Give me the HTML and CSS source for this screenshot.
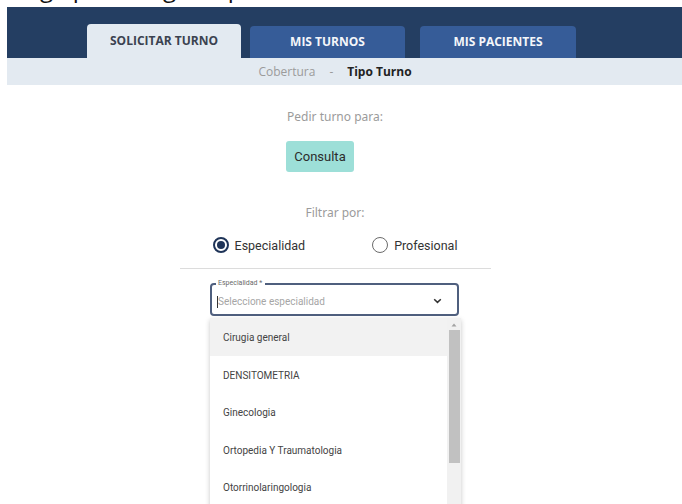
FILE: index.html
```html
<!DOCTYPE html>
<html lang="es">
<head>
<meta charset="utf-8">
<title>Solicitar turno</title>
<link rel="stylesheet" href="styles.css">
</head>
<body>
<div class="page">
  <div class="intro"><h1 class="intro-title">Llegá para elegir tu plan</h1></div>

  <header class="topbar">
    <nav class="tabs">
      <a class="tab tab-active">SOLICITAR TURNO</a>
      <a class="tab tab-second">MIS TURNOS</a>
      <a class="tab tab-third">MIS PACIENTES</a>
    </nav>
  </header>

  <div class="crumbs">
    <div class="crumbs-inner">
      <span class="crumb">Cobertura</span>
      <span class="crumb-sep">-</span>
      <span class="crumb crumb-current">Tipo Turno</span>
    </div>
  </div>

  <main class="main">
    <p class="hint">Pedir turno para:</p>
    <button class="chip">Consulta</button>

    <p class="hint hint-filter">Filtrar por:</p>
    <div class="radios">
      <label class="radio">
        <span class="radio-dot radio-dot-on"></span>
        <span class="radio-label">Especialidad</span>
      </label>
      <label class="radio">
        <span class="radio-dot"></span>
        <span class="radio-label">Profesional</span>
      </label>
    </div>

    <hr class="divider">

    <div class="select-wrap">
      <div class="select">
        <span class="select-label">Especialidad *</span>
        <span class="caret"></span>
        <span class="select-placeholder">Seleccione especialidad</span>
        <svg class="chevron" width="9" height="6" viewBox="0 0 9 6"><path d="M1.2 1.2 L4.5 4.4 L7.8 1.2" fill="none" stroke="#333" stroke-width="1.5"/></svg>
      </div>

      <div class="menu">
        <ul class="menu-list">
          <li class="menu-item menu-item-active">Cirugia general</li>
          <li class="menu-item">DENSITOMETRIA</li>
          <li class="menu-item">Ginecologia</li>
          <li class="menu-item">Ortopedia Y Traumatologia</li>
          <li class="menu-item">Otorrinolaringologia</li>
        </ul>
        <div class="scrollbar">
          <svg class="scroll-up" width="8" height="6" viewBox="0 0 8 6"><path d="M4 1.5 L6.5 4.5 L1.5 4.5 Z" fill="#a3a3a3"/></svg>
          <div class="scroll-thumb"></div>
        </div>
      </div>
    </div>
  </main>
</div>
</body>
</html>
```

FILE: styles.css
```css
html, body {
  margin: 0;
  padding: 0;
  background: #fff;
  overflow: hidden;
}

.page {
  padding-left: 7px;
  height: 504px;
  font-family: "Open Sans", "Noto Sans", sans-serif;
}

/* heading above the bar, only its lowest edge is in view */
.intro {
  height: 7px;
  overflow: hidden;
  display: flex;
  align-items: flex-end;
  margin-left: -7px;
}
.intro-title {
  margin: 0 0 0 8px;
  font-family: "Open Sans", sans-serif;
  font-weight: 400;
  font-size: 24px;
  line-height: 32px;
  padding-bottom: 3px;
  white-space: nowrap;
  color: #111;
}

/* navigation bar */
.topbar {
  height: 51px;
  background: #243e62;
  display: flex;
  align-items: flex-end;
}
.tabs {
  display: flex;
  align-items: flex-end;
  padding-left: 80px;
}
.tab {
  width: 155px;
  height: 32px;
  display: flex;
  align-items: center;
  justify-content: center;
  border-radius: 4px 4px 0 0;
  background: #365c98;
  color: #f4f6fa;
  font-weight: 700;
  font-size: 12px;
  padding-bottom: 1px;
  box-sizing: border-box;
}
.tab-active {
  width: 154px;
  height: 34px;
  background: #e3eaf1;
  color: #3b4250;
  padding-bottom: 2px;
}
.tab-second { margin-left: 9px; }
.tab-third { margin-left: 15px; width: 156px; }

/* breadcrumb strip */
.crumbs {
  height: 27px;
  background: #e3eaf1;
}
.crumbs-inner {
  width: 312px;
  margin-left: 172px;
  height: 27px;
  display: flex;
  align-items: center;
  justify-content: center;
  font-size: 12px;
}
.crumb { color: #9b9b9b; }
.crumb-sep { color: #9b9b9b; margin: 0 14px 0 14px; }
.crumb-current { color: #222; font-weight: 700; }

/* form column */
.main {
  width: 312px;
  margin-left: 172px;
  display: flex;
  flex-direction: column;
  align-items: center;
}
.hint {
  margin: 24px 0 0;
  font-family: "Noto Sans", sans-serif;
  font-size: 12px;
  line-height: 16px;
  color: #9b9b9b;
}
.hint-filter { margin-top: 33px; }

.chip {
  align-self: flex-start;
  margin: 16px 0 0 107px;
  width: 68px;
  height: 31px;
  border: 0;
  border-radius: 3px;
  background: #9ddfd8;
  color: #2c2c2c;
  font-family: Roboto, sans-serif;
  font-size: 13px;
  padding: 0;
}

.radios {
  margin-top: 16px;
  display: flex;
  align-items: center;
  gap: 67px;
  height: 16px;
}
.radio {
  display: flex;
  align-items: center;
  gap: 6px;
  font-family: Roboto, sans-serif;
  font-size: 12.5px;
  color: #333;
}
.radio-dot {
  width: 16px;
  height: 16px;
  box-sizing: border-box;
  border: 1.5px solid #6b6b6b;
  border-radius: 50%;
  display: flex;
  align-items: center;
  justify-content: center;
}
.radio-dot-on { border: 2px solid #1f3458; }
.radio-dot-on::after {
  content: "";
  width: 8px;
  height: 8px;
  border-radius: 50%;
  background: #1f3458;
}

.divider {
  width: 311px;
  margin: 15px 0 0;
  border: 0;
  border-top: 1px solid #dcdcdc;
}

/* outlined select with open menu */
.select-wrap {
  position: relative;
  margin: 14px 0 0 31px;
  align-self: flex-start;
  width: 251px;
}
.select {
  position: relative;
  width: 249px;
  height: 33px;
  box-sizing: border-box;
  border: 2px solid #4f5f7e;
  border-radius: 4px;
  display: flex;
  align-items: center;
  padding-left: 5px;
  padding-top: 4px;
}
.select-label {
  position: absolute;
  top: -6px;
  left: 4px;
  background: #fff;
  padding: 0 3px 0 2px;
  font-family: Roboto, sans-serif;
  font-size: 7px;
  line-height: 9px;
  color: #6a6a6a;
}
.caret {
  width: 1px;
  height: 12px;
  background: #333;
}
.select-placeholder {
  font-family: Roboto, sans-serif;
  font-size: 10px;
  color: #a6a6a6;
}
.chevron {
  position: absolute;
  right: 15px;
  top: 13px;
}

.menu {
  position: absolute;
  top: 35px;
  left: 0;
  width: 251px;
  height: 190px;
  background: #fff;
  box-shadow: 0 2px 5px rgba(0, 0, 0, 0.22);
  display: flex;
}
.menu-list {
  list-style: none;
  margin: 0;
  padding: 0;
  flex: 1;
}
.menu-item {
  height: 37.5px;
  box-sizing: border-box;
  padding-top: 2px;
  display: flex;
  align-items: center;
  padding-left: 13px;
  font-family: Roboto, sans-serif;
  font-size: 10px;
  color: #444;
}
.menu-item-active { background: #f2f2f2; }

.scrollbar {
  width: 14px;
  background: #f1f1f1;
  display: flex;
  flex-direction: column;
  align-items: center;
}
.scroll-up { margin-top: 4px; }
.scroll-thumb {
  margin-top: 2px;
  width: 11px;
  height: 133px;
  background: #c1c1c1;
}
```
